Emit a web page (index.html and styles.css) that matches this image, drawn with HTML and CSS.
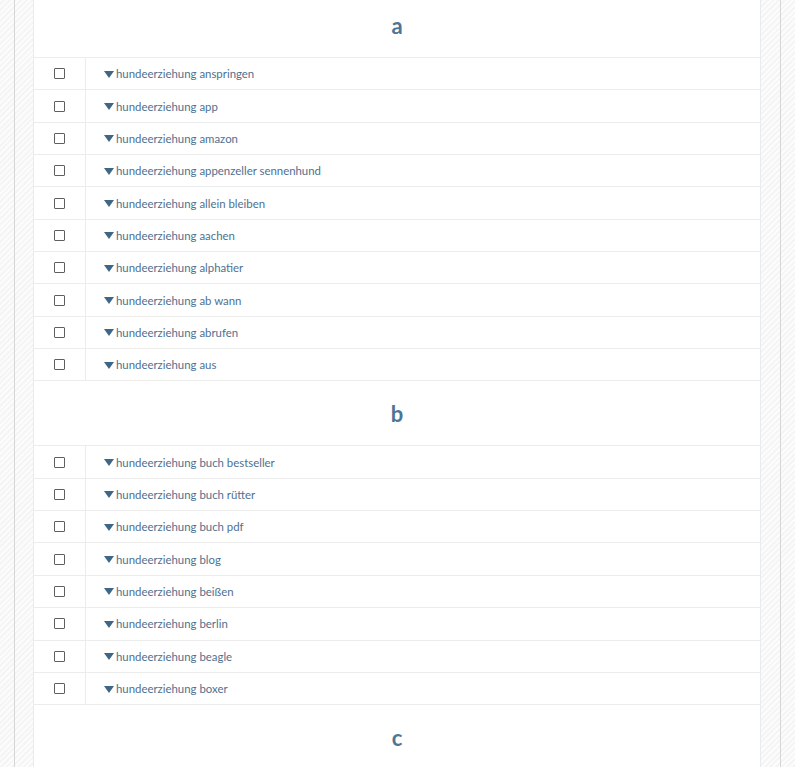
FILE: index.html
```html
<!DOCTYPE html>
<html>
<head>
<meta charset="utf-8">
<link rel="stylesheet" href="styles.css">
</head>
<body>
<div class="page">
  <div class="frame">
    <div class="table">
      <div class="head">a</div>
      <div class="row"><div class="chk"><span class="box"></span></div><div class="txt"><span class="tri"></span>hundeerziehung anspringen</div></div>
      <div class="row"><div class="chk"><span class="box"></span></div><div class="txt"><span class="tri"></span>hundeerziehung app</div></div>
      <div class="row"><div class="chk"><span class="box"></span></div><div class="txt"><span class="tri"></span>hundeerziehung amazon</div></div>
      <div class="row"><div class="chk"><span class="box"></span></div><div class="txt"><span class="tri"></span>hundeerziehung appenzeller sennenhund</div></div>
      <div class="row"><div class="chk"><span class="box"></span></div><div class="txt"><span class="tri"></span>hundeerziehung allein bleiben</div></div>
      <div class="row"><div class="chk"><span class="box"></span></div><div class="txt"><span class="tri"></span>hundeerziehung aachen</div></div>
      <div class="row"><div class="chk"><span class="box"></span></div><div class="txt"><span class="tri"></span>hundeerziehung alphatier</div></div>
      <div class="row"><div class="chk"><span class="box"></span></div><div class="txt"><span class="tri"></span>hundeerziehung ab wann</div></div>
      <div class="row"><div class="chk"><span class="box"></span></div><div class="txt"><span class="tri"></span>hundeerziehung abrufen</div></div>
      <div class="row"><div class="chk"><span class="box"></span></div><div class="txt"><span class="tri"></span>hundeerziehung aus</div></div>
      <div class="head">b</div>
      <div class="row"><div class="chk"><span class="box"></span></div><div class="txt"><span class="tri"></span>hundeerziehung buch bestseller</div></div>
      <div class="row"><div class="chk"><span class="box"></span></div><div class="txt"><span class="tri"></span>hundeerziehung buch rütter</div></div>
      <div class="row"><div class="chk"><span class="box"></span></div><div class="txt"><span class="tri"></span>hundeerziehung buch pdf</div></div>
      <div class="row"><div class="chk"><span class="box"></span></div><div class="txt"><span class="tri"></span>hundeerziehung blog</div></div>
      <div class="row"><div class="chk"><span class="box"></span></div><div class="txt"><span class="tri"></span>hundeerziehung beißen</div></div>
      <div class="row"><div class="chk"><span class="box"></span></div><div class="txt"><span class="tri"></span>hundeerziehung berlin</div></div>
      <div class="row"><div class="chk"><span class="box"></span></div><div class="txt"><span class="tri"></span>hundeerziehung beagle</div></div>
      <div class="row"><div class="chk"><span class="box"></span></div><div class="txt"><span class="tri"></span>hundeerziehung boxer</div></div>
      <div class="head">c</div>
    </div>
  </div>
</div>
</body>
</html>
```
FILE: styles.css
```css
html, body {
  margin: 0;
  padding: 0;
}
body {
  background-color: #f8f8f8;
  background-image: repeating-linear-gradient(135deg, rgba(255,255,255,0.6) 0 2px, rgba(240,240,240,0.4) 2px 4px);
  font-family: Lato, "Open Sans", sans-serif;
  overflow: hidden;
  height: 767px;
}
.page {
  padding-left: 14px;
  width: 767px;
  margin-top: -7px;
}
.frame {
  border-left: 1px solid #d6d6d6;
  border-right: 1px solid #d6d6d6;
  padding: 0 18px;
  min-height: 800px;
}
.table {
  background: #ffffff;
  border-left: 1px solid #e6edf1;
  border-right: 1px solid #e6edf1;
  width: 728px;
  box-sizing: border-box;
}
.head {
  height: 65px;
  box-sizing: border-box;
  border-bottom: 1px solid #ececec;
  display: flex;
  align-items: center;
  justify-content: center;
  font-size: 22px;
  font-weight: 700;
  color: #4e7595;
  padding-top: 0;
}
.row {
  display: flex;
  height: 32.35px;
  box-sizing: border-box;
  border-bottom: 1px solid #ececec;
}
.chk {
  width: 52px;
  border-right: 1px solid #ececec;
  display: flex;
  align-items: center;
  justify-content: center;
  box-sizing: border-box;
}
.box {
  width: 11px;
  height: 11px;
  box-sizing: border-box;
  border: 1px solid #5f5f5f;
  border-radius: 1px;
  background: #fff;
}
.txt {
  display: flex;
  align-items: center;
  padding-left: 18px;
  font-size: 11.4px;
  color: #4f7090;
}
.tri {
  width: 0;
  height: 0;
  border-left: 5px solid transparent;
  border-right: 5px solid transparent;
  border-top: 7px solid #3e6787;
  margin-right: 2px;
  margin-top: 1px;
}
```
